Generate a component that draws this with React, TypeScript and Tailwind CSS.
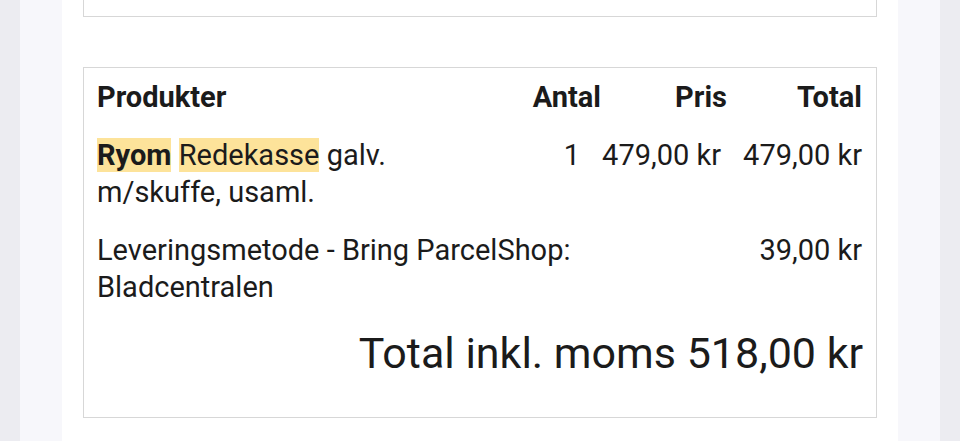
import React from 'react';

type Line = {
  name: React.ReactNode;
  qty: string;
  price: string;
  total: string;
};

const lines: Line[] = [
  {
    name: (
      <>
        <span className="bg-[#fde39a] font-bold">Ryom</span> <span className="bg-[#fde39a]">Redekasse</span> galv. m/skuffe, usaml.
      </>
    ),
    qty: '1',
    price: '479,00 kr',
    total: '479,00 kr',
  },
];

const App: React.FC = () => {
  return (
    <div className="min-h-screen bg-[#ececf1] font-['Roboto',sans-serif] text-[#1b1b1b]">
      <div className="mx-[20px] min-h-[441px] bg-[#f7f7fb] px-[42px]">
        <div className="min-h-[441px] bg-white px-[21px]">
          {/* previous section, cut off by the top edge */}
          <div className="h-[17px] border border-t-0 border-[#d7d7d7]" />

          <div className="mt-[50px] border border-[#d7d7d7] px-[13px] pb-[28px] text-[29px] leading-[37px]">
            <div className="flex py-[10.5px] font-bold">
              <div className="w-[400px]">Produkter</div>
              <div className="w-[104px] text-right">Antal</div>
              <div className="w-[126px] text-right">Pris</div>
              <div className="w-[135px] text-right">Total</div>
            </div>

            {lines.map((l, i) => (
              <div key={i} className="flex py-[10.5px]">
                <div className="w-[400px]">{l.name}</div>
                <div className="w-[104px] pr-[21px] text-right">{l.qty}</div>
                <div className="w-[126px] pr-[6px] text-right">{l.price}</div>
                <div className="w-[135px] text-right">{l.total}</div>
              </div>
            ))}

            <div className="flex py-[10.5px]">
              <div className="w-[630px]">Leveringsmetode - Bring ParcelShop: Bladcentralen</div>
              <div className="w-[135px] text-right">39,00 kr</div>
            </div>

            <div className="py-[10.5px] text-right text-[43px] leading-[52px]">
              Total inkl. moms 518,00 kr
            </div>
          </div>
        </div>
      </div>
    </div>
  );
};

export default App;
